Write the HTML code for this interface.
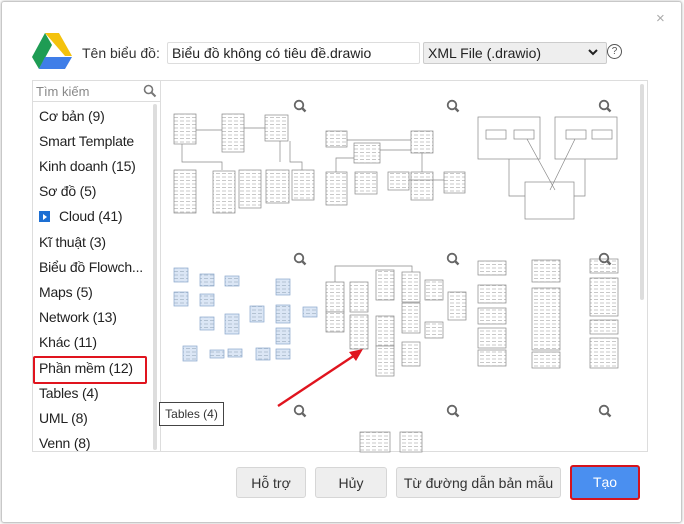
<!DOCTYPE html>
<html><head><meta charset="utf-8"><style>
body{margin:0;width:684px;height:524px;background:#fff;font-family:"Liberation Sans","DejaVu Sans",sans-serif;position:relative;overflow:hidden}
.a{position:absolute}
.dlg{left:1px;top:1px;width:679px;height:520px;border:1px solid #c8c8c8;border-radius:3px;box-shadow:0 0 3px #bbb}
.it{position:absolute;left:39px;font-size:14px;color:#222;white-space:nowrap;letter-spacing:-0.2px}
.btn{position:absolute;top:467px;height:31px;background:#eee;border:1px solid #d6d6d6;border-radius:3px;font-size:14px;color:#333;text-align:center;line-height:31px;box-sizing:border-box}
</style></head><body>
<div class="a dlg"></div>
<div class="a" style="left:656px;top:10px;color:#aaa;font-size:15px">×</div>
<svg class="a" style="left:32px;top:33px" width="40" height="36" viewBox="0 0 40 36">
<polygon points="13,0 27,0 40,23 33,23" fill="#f4c20d"/>
<polygon points="13,0 20,12 7,36 0,24" fill="#1e9c54"/>
<polygon points="13,24 40,24 33,36 7,36" fill="#3f7ee8"/>
</svg>
<div class="a" style="left:82px;top:45px;font-size:14px;color:#333">Tên biểu đồ:</div>
<div class="a" style="left:167px;top:42px;width:247px;height:20px;border:1px solid #ddd;border-radius:2px;font-size:14px;line-height:20px;padding-left:4px;color:#222">Biểu đồ không có tiêu đề.drawio</div>
<div class="a" style="left:423px;top:42px;width:178px;height:20px;border:1px solid #ccc;border-radius:2px;background:#eee;font-size:14px;line-height:20px;padding-left:4px;color:#222">XML File (.drawio)</div>
<svg class="a" style="left:588px;top:48px" width="10" height="8"><path d="M1 2L5 6L9 2" stroke="#222" stroke-width="2" fill="none"/></svg>
<div class="a" style="left:607px;top:44px;width:13px;height:13px;border:1.3px solid #555;border-radius:50%;font-size:10px;line-height:13px;text-align:center;color:#555">?</div>

<div class="a" style="left:32px;top:80px;width:616px;height:372px;border:1px solid #ddd;box-sizing:border-box"></div>
<div class="a" style="left:32px;top:80px;width:129px;height:22px;border-bottom:1px solid #ddd;border-right:1px solid #ddd;box-sizing:border-box;font-size:13px;color:#888;padding:4px 0 0 4px">Tìm kiếm</div>
<svg class="a" style="left:143px;top:84px" width="14" height="14"><circle cx="5.5" cy="5.5" r="4" stroke="#777" stroke-width="1.6" fill="none"/><line x1="8.5" y1="8.5" x2="12.5" y2="12.5" stroke="#777" stroke-width="2"/></svg>
<div class="a" style="left:160px;top:80px;width:1px;height:372px;background:#ddd"></div>
<div class="a" style="left:153px;top:104px;width:4px;height:346px;background:#ddd;border-radius:2px"></div>
<div class="a" style="left:640px;top:84px;width:4px;height:216px;background:#ddd;border-radius:2px"></div>
<div class="it" style="top:108px">Cơ bản (9)</div>
<div class="it" style="top:133px">Smart Template</div>
<div class="it" style="top:158px">Kinh doanh (15)</div>
<div class="it" style="top:183px">Sơ đồ (5)</div>
<div class="a" style="left:39px;top:211px;width:11px;height:11px;background:#1d6fd3"></div><div class="a" style="left:43px;top:214px;width:0;height:0;border-left:4px solid #fff;border-top:3px solid transparent;border-bottom:3px solid transparent"></div>
<div class="it" style="top:208px;left:59px">Cloud (41)</div>
<div class="it" style="top:234px">Kĩ thuật (3)</div>
<div class="it" style="top:259px">Biểu đồ Flowch...</div>
<div class="it" style="top:284px">Maps (5)</div>
<div class="it" style="top:309px">Network (13)</div>
<div class="it" style="top:334px">Khác (11)</div>
<div class="it" style="top:360px">Phần mềm (12)</div>
<div class="a" style="left:33px;top:356px;width:110px;height:24px;border:2px solid #e0141e;border-radius:2px"></div>
<div class="it" style="top:385px">Tables (4)</div>
<div class="it" style="top:410px">UML (8)</div>
<div class="it" style="top:435px">Venn (8)</div>

<svg class="a" style="left:0;top:0" width="684" height="524">
<defs>
<pattern id="p" width="6" height="3.5" patternUnits="userSpaceOnUse"><rect width="6" height="3.5" fill="#fff"/><line x1="0" y1="2" x2="4" y2="2" stroke="#bbb" stroke-width="0.8"/></pattern>
<pattern id="q" width="6" height="3.5" patternUnits="userSpaceOnUse"><rect width="6" height="3.5" fill="#dbe6f5"/><line x1="0" y1="2" x2="4" y2="2" stroke="#9ab" stroke-width="0.6"/></pattern>
</defs>
<g fill="url(#p)" stroke="#888" stroke-width="0.7">
<rect x="174" y="114" width="22" height="30"/><rect x="222" y="114" width="22" height="38"/><rect x="265" y="115" width="23" height="26"/>
<rect x="174" y="170" width="22" height="43"/><rect x="213" y="171" width="22" height="42"/><rect x="239" y="170" width="22" height="38"/><rect x="266" y="170" width="23" height="33"/><rect x="292" y="170" width="22" height="30"/>
<rect x="326" y="131" width="21" height="16"/><rect x="354" y="143" width="26" height="20"/><rect x="411" y="131" width="22" height="22"/><rect x="326" y="172" width="21" height="33"/><rect x="355" y="172" width="22" height="22"/><rect x="388" y="172" width="21" height="18"/><rect x="411" y="172" width="22" height="28"/><rect x="444" y="172" width="21" height="21"/>
<rect x="326" y="282" width="18" height="30"/><rect x="350" y="282" width="18" height="30"/><rect x="376" y="270" width="18" height="30"/><rect x="402" y="272" width="18" height="30"/><rect x="425" y="280" width="18" height="20"/><rect x="448" y="292" width="18" height="28"/>
<rect x="326" y="312" width="18" height="20"/><rect x="350" y="315" width="18" height="34"/><rect x="376" y="316" width="18" height="30"/><rect x="402" y="303" width="18" height="30"/><rect x="425" y="322" width="18" height="16"/>
<rect x="376" y="346" width="18" height="30"/><rect x="402" y="342" width="18" height="24"/>
<rect x="478" y="261" width="28" height="14"/><rect x="478" y="285" width="28" height="18"/><rect x="478" y="308" width="28" height="16"/><rect x="478" y="328" width="28" height="20"/><rect x="478" y="350" width="28" height="16"/>
<rect x="532" y="260" width="28" height="22"/><rect x="532" y="288" width="28" height="62"/><rect x="532" y="352" width="28" height="16"/>
<rect x="590" y="259" width="28" height="14"/><rect x="590" y="278" width="28" height="38"/><rect x="590" y="320" width="28" height="14"/><rect x="590" y="338" width="28" height="30"/>
<rect x="360" y="432" width="30" height="20"/><rect x="400" y="432" width="22" height="20"/>
</g>
<g fill="none" stroke="#888" stroke-width="0.7">
<path d="M196 130H222M244 128H265M182 144V162H222V170M280 141V162M290 141V162H302V170"/>
<path d="M347 140H411M380 150H411M336 172V158H354M422 153V172M409 180H444"/>
<rect x="478" y="117" width="62" height="42"/><rect x="555" y="117" width="62" height="42"/><rect x="525" y="182" width="49" height="37"/>
<rect x="486" y="130" width="20" height="9"/><rect x="514" y="130" width="20" height="9"/><rect x="566" y="130" width="20" height="9"/><rect x="592" y="130" width="20" height="9"/>
<path d="M527 139L555 190M575 139L550 190M509 159V196H525M585 159V196H574"/>
<path d="M335 282V266H412V272"/>
</g>
<g fill="url(#q)" stroke="#8aa6cc" stroke-width="0.7">
<rect x="174" y="268" width="14" height="14"/><rect x="200" y="274" width="14" height="12"/><rect x="225" y="276" width="14" height="10"/><rect x="276" y="279" width="14" height="16"/>
<rect x="174" y="292" width="14" height="14"/><rect x="200" y="294" width="14" height="12"/><rect x="250" y="306" width="14" height="16"/><rect x="276" y="305" width="14" height="18"/><rect x="303" y="307" width="14" height="10"/>
<rect x="200" y="317" width="14" height="13"/><rect x="225" y="314" width="14" height="20"/><rect x="276" y="328" width="14" height="16"/>
<rect x="183" y="346" width="14" height="15"/><rect x="210" y="350" width="14" height="8"/><rect x="228" y="349" width="14" height="8"/><rect x="256" y="348" width="14" height="12"/><rect x="276" y="349" width="14" height="10"/>
</g>
<g stroke="#666" stroke-width="1.8" fill="none">
<g id="m"><circle cx="299" cy="105" r="4.3"/><line x1="302" y1="108" x2="305.5" y2="111.5" stroke-width="2.4"/></g>
<use href="#m" x="153"/><use href="#m" x="305"/><use href="#m" y="153"/><use href="#m" x="153" y="153"/><use href="#m" x="305" y="153"/><use href="#m" y="305"/><use href="#m" x="153" y="305"/><use href="#m" x="305" y="305"/>
</g>
<line x1="278" y1="406" x2="355" y2="355" stroke="#e0141e" stroke-width="2.4"/>
<polygon points="363,349 349,352 356,361" fill="#e0141e"/>
</svg>
<div class="a" style="left:159px;top:402px;width:63px;height:22px;border:1px solid #444;background:#fff;font-size:12px;line-height:22px;text-align:center;color:#333">Tables (4)</div>

<div class="btn" style="left:236px;width:70px">Hỗ trợ</div>
<div class="btn" style="left:315px;width:72px">Hủy</div>
<div class="btn" style="left:396px;width:165px">Từ đường dẫn bản mẫu</div>
<div class="btn" style="left:570px;width:70px;background:#4a8ff0;color:#fff;border:2px solid #d4141e;top:465px;height:35px;line-height:31px">Tạo</div>
</body></html>
